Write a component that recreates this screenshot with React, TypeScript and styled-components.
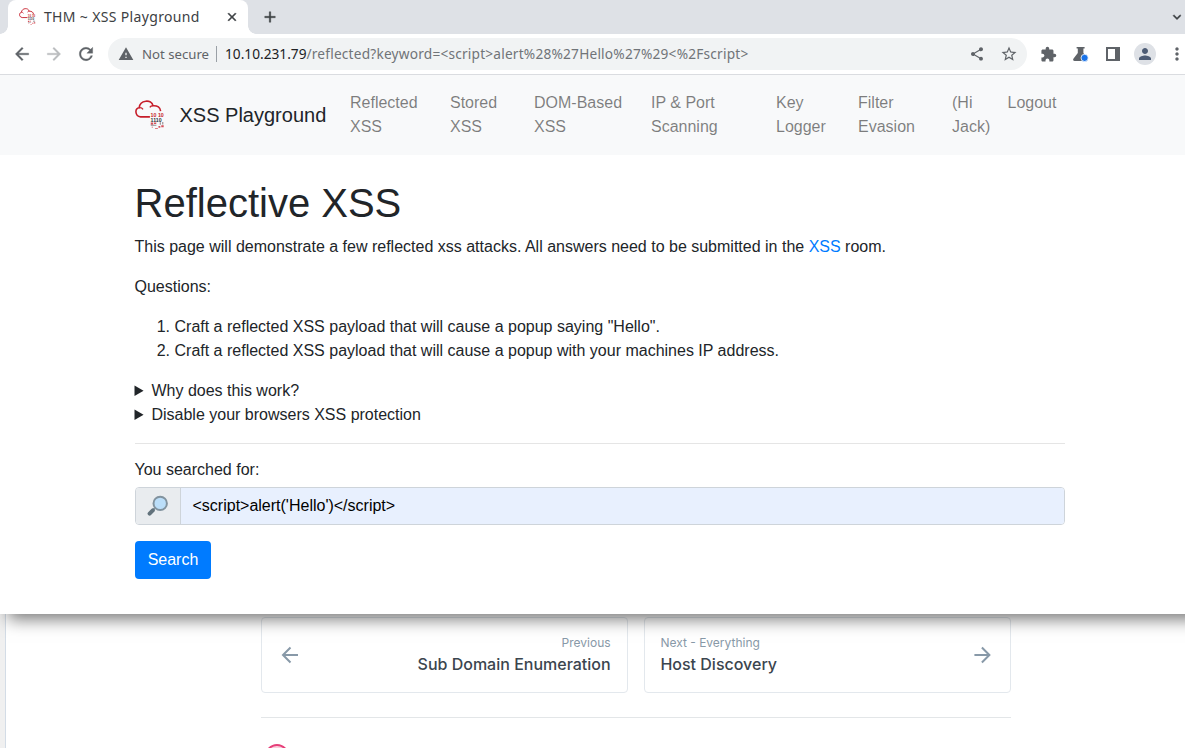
import React from "react";
import styled, { createGlobalStyle } from "styled-components";
import {
  MdArrowBack, MdArrowForward, MdRefresh, MdWarning, MdShare, MdStarBorder,
  MdExtension, MdPerson, MdMoreVert, MdClose, MdAdd, MdExpandMore,
} from "react-icons/md";

const GlobalStyle = createGlobalStyle`
  *, *::before, *::after { box-sizing: border-box; }
  html, body, #root { margin: 0; width: 1185px; height: 748px; overflow: hidden; }
  body { background: #fff; }
  svg { display: block; flex: none; }
`;

const Screen = styled.div`
  display: flex;
  flex-direction: column;
  width: 1185px;
  height: 748px;
  overflow: hidden;
`;

const BrowserWindow = styled.div`
  position: relative;
  z-index: 1;
  flex: none;
  width: 1200px;
  height: 614px;
  background: #fff;
  box-shadow: 8px 5px 16px rgba(0, 0, 0, 0.54);
`;

const TabStrip = styled.div`
  display: flex;
  align-items: flex-start;
  height: 34px;
  padding-left: 8px;
  background: #dee1e6;
  color: #3c4043;
`;

const Tab = styled.div`
  position: relative;
  display: flex;
  align-items: center;
  width: 240px;
  height: 34px;
  padding: 0 9px 1px 11px;
  border-radius: 8px 8px 0 0;
  background: #fff;
  &::before, &::after {
    content: "";
    position: absolute;
    bottom: 0;
    width: 8px;
    height: 8px;
  }
  &::before { left: -8px; background: radial-gradient(circle at 0 0, transparent 7.5px, #fff 8px); }
  &::after { right: -8px; background: radial-gradient(circle at 100% 0, transparent 7.5px, #fff 8px); }
`;

const TabTitle = styled.span`
  flex: 1;
  margin-left: 8px;
  font: 14px "Noto Sans", sans-serif;
  letter-spacing: 0.34px;
  white-space: nowrap;
`;

const CloseIcon = styled(MdClose)`
  path:not([fill="none"]) { stroke: currentColor; stroke-width: 0.9px; }
`;

const NewTab = styled.div`
  margin: 8px 0 0 13px;
  path:not([fill="none"]) { stroke: currentColor; stroke-width: 0.5px; }
`;

const TabSearch = styled.div`
  margin: 9px 15px 0 auto;
  path:not([fill="none"]) { stroke: currentColor; stroke-width: 0.6px; }
`;

const Toolbar = styled.div`
  display: flex;
  align-items: center;
  height: 41px;
  padding-left: 12px;
  border-bottom: 1px solid #dadce0;
  color: #5f6368;
`;

const NavIcon = styled.div<{ $muted?: boolean }>`
  width: 32px;
  color: ${(p) => (p.$muted ? "#babcbe" : "#5f6368")};
  path:not([fill="none"]) { stroke: currentColor; stroke-width: 0.4px; }
`;

const AddressBar = styled.div`
  display: flex;
  align-items: center;
  width: 919px;
  height: 32px;
  padding: 0 9px 0 10px;
  border-radius: 16px;
  background: #f1f3f4;
  font: 14px "Noto Sans", sans-serif;
  white-space: nowrap;
`;

const Security = styled.span`
  width: 75px;
  margin-left: 8px;
  padding-right: 7px;
  border-right: 1px solid #9aa0a6;
  line-height: 16px;
  font-size: 13.2px;
`;

const Url = styled.span`
  flex: 1;
  margin-left: 8px;
  color: #707478;
  font-size: 13.7px;
  line-height: 18px;
  letter-spacing: 0.2px;
  b { font-weight: 400; letter-spacing: 0; color: #202124; }
`;

const BarIcons = styled.div`
  display: flex;
  align-items: center;
  gap: 15px;
`;

const Extensions = styled.div`
  display: flex;
  align-items: center;
  margin-left: 13px;
`;

const ExtensionSlot = styled.div<{ $width?: number }>`
  display: flex;
  width: ${(p) => p.$width ?? 32}px;
`;

const Avatar = styled.div`
  display: flex;
  align-items: center;
  justify-content: center;
  width: 22px;
  height: 22px;
  margin: 0 11px 0 -4px;
  border-radius: 50%;
  background: #dee1e6;
  color: #4d5c75;
`;

const Page = styled.div`
  font: 16px/24px "Liberation Sans", Arial, sans-serif;
  color: #212529;
`;

const Navbar = styled.nav`
  display: flex;
  align-items: center;
  height: 80px;
  padding-left: 134.5px;
  background: #f8f9fa;
`;

const Brand = styled.div`
  display: flex;
  align-items: center;
  width: 207.5px;
  font-size: 20px;
  line-height: 30px;
  white-space: nowrap;
  svg { margin-right: 15px; }
`;

const NavLink = styled.a<{ $width: number }>`
  width: ${(p) => p.$width}px;
  height: 64px;
  padding: 8px;
  color: rgba(0, 0, 0, 0.5);
`;

const Container = styled.main`
  width: 930px;
  margin: 24px 0 0 134.5px;
`;

const Heading = styled.h1`
  margin: 0 0 8px;
  font-size: 40px;
  font-weight: 400;
  line-height: 48px;
`;

const Paragraph = styled.p`
  margin: 0 0 16px;
  a { color: #007bff; }
`;

const Questions = styled.ol`
  margin: 0 0 16px;
  padding-left: 40px;
`;

const Details = styled.details`
  height: 24px;
`;

const Rule = styled.hr`
  margin: 16px 0 14px;
  border: 0;
  border-top: 1px solid rgba(0, 0, 0, 0.1);
`;

const Label = styled.label`
  display: block;
  margin-bottom: 5px;
`;

const InputGroup = styled.div`
  display: flex;
  height: 38px;
  margin-bottom: 16px;
  border: 1px solid #ced4da;
  border-radius: 4px;
  overflow: hidden;
`;

const Prepend = styled.div`
  display: flex;
  align-items: center;
  width: 45px;
  padding-left: 11px;
  background: #e9ecef;
  border-right: 1px solid #ced4da;
`;

const Field = styled.div`
  flex: 1;
  padding: 6px 12px;
  background: #e8f0fe;
  color: #000;
`;

const SearchButton = styled.button`
  display: block;
  width: 76px;
  height: 38px;
  padding: 0 0 0 1px;
  border: 0;
  border-radius: 4px;
  background: #007bff;
  color: #fff;
  font: inherit;
`;

const Backdrop = styled.div`
  display: flex;
  flex: 1;
  background: #fff;
  font-family: Inter, sans-serif;
`;

const SideStrip = styled.div`
  width: 6px;
  background: #f0f0f0;
  border-right: 1px solid #d3dce6;
`;

const Article = styled.div`
  width: 750px;
  margin: 3px 0 0 255px;
`;

const Pager = styled.div`
  display: flex;
  gap: 16px;
  height: 100px;
  padding-bottom: 24px;
`;

const PagerCard = styled.div`
  display: flex;
  flex: 1;
  align-items: center;
  justify-content: space-between;
  padding: 0 16.4px 0 15.4px;
  border: 1px solid #e3e8ed;
  border-radius: 4px;
  color: #8899a8;
`;

const PagerText = styled.div<{ $right?: boolean }>`
  text-align: ${(p) => (p.$right ? "right" : "left")};
`;

const PagerHint = styled.div`
  font-size: 12px;
  line-height: 18px;
`;

const PagerTitle = styled.div`
  color: #3b454e;
  font-size: 16px;
  font-weight: 500;
  line-height: 24px;
`;

const Footer = styled.div`
  height: 60px;
  padding: 26px 0 0 4px;
  border-top: 1px solid #e3e6e8;
`;

const CloudLogo = ({ size }: { size: number }) => (
  <svg width={size} height={size} viewBox="0.6 0 30 32" fill="none">
    <path d="M15.5 18H5.5C-.6 17.4-.9 8.8 4.1 8.2 4.8-.3 17.4-1.1 18.8 6.1c4.7-.4 7.9 2 8.1 5.8" stroke="#c61e2a" strokeWidth="1.7" />
    <path d="M4.1 8.2c2-.2 3.3.6 4 1.8M18.8 6.1c-1.5.1-2.7.7-3.4 1.8" stroke="#c61e2a" strokeWidth="1.4" />
    <g fontFamily="Liberation Sans, sans-serif" fontSize="5.6" fontWeight="700">
      <text x="16.2" y="17.6" fill="#c61e2a">10</text>
      <text x="24" y="17.6" fill="#c61e2a">10</text>
      <text x="16.2" y="23" fill="#33363a">1110</text>
    </g>
    <path d="M16.4 24h2.6v2.4h-2.6zM19.9 24h2.4v1.6h-2.4zM17.4 28.4h1.4v1h-1.4zM21 30h3v1h-3zM24.6 27.6h2v2h-2zM27.6 27h2.6v2h-2.6z" fill="#d5505a" />
    <path d="M16.4 26.4h6v1h-6zM26 23.6h1.2v2.8H26zM28.6 23.4h1.2v2.8h-1.2z" fill="#938c90" />
  </svg>
);

const Flask = () => (
  <svg width="17" height="18" viewBox="-0.6 0 17 18">
    <path d="M4 2h8v1.6h-1.2V8l4 6c.6 1-.2 2-1.2 2H2c-1.3 0-1.9-1.2-1.2-2.2L5.2 8V3.6H4z" fill="#5f6368" />
    <circle cx="12" cy="12.9" r="3.6" fill="#1a73e8" stroke="#fff" strokeWidth="0.8" />
  </svg>
);

const SidePanel = () => (
  <svg width="14" height="14" viewBox="0 0 14 14">
    <path d="M0 0h14v14H0zM2 2v10h7V2z" fill="#5f6368" fillRule="evenodd" />
  </svg>
);

const Magnifier = () => (
  <svg width="22" height="22" viewBox="0 0 22 22">
    <path d="m8 13-2 2" stroke="#82939f" strokeWidth="2" />
    <path d="m5.8 15.4-3.2 3.2" stroke="#62727c" strokeWidth="4" strokeLinecap="round" />
    <circle cx="13.2" cy="8.4" r="6.7" fill="#bbdef9" stroke="#82939f" strokeWidth="2" />
  </svg>
);

const ArrowLeft = () => (
  <svg width="24" height="24" viewBox="0 0 24 24" fill="none" stroke="currentColor" strokeWidth="2">
    <path d="M21 12H6M13.5 4.5 6 12l7.5 7.5" />
  </svg>
);

const ArrowRight = () => (
  <svg width="24" height="24" viewBox="0 0 24 24" fill="none" stroke="currentColor" strokeWidth="2">
    <path d="M4.4 12h15M11.9 4.5l7.5 7.5-7.5 7.5" />
  </svg>
);

const links: { label: string; width: number }[] = [
  { label: "Reflected XSS", width: 100 },
  { label: "Stored XSS", width: 84 },
  { label: "DOM-Based XSS", width: 117 },
  { label: "IP & Port Scanning", width: 125 },
  { label: "Key Logger", width: 82 },
  { label: "Filter Evasion", width: 94 },
  { label: "(Hi Jack)", width: 55.5 },
  { label: "Logout", width: 66 },
];

export default function App() {
  return (
    <Screen>
      <GlobalStyle />
      <BrowserWindow>
        <TabStrip>
          <Tab>
            <CloudLogo size={17} />
            <TabTitle>THM ~ XSS Playground</TabTitle>
            <CloseIcon size={14} />
          </Tab>
          <NewTab><MdAdd size={18} /></NewTab>
          <TabSearch><MdExpandMore size={16} /></TabSearch>
        </TabStrip>
        <Toolbar>
          <NavIcon><MdArrowBack size={20} /></NavIcon>
          <NavIcon $muted><MdArrowForward size={20} /></NavIcon>
          <NavIcon><MdRefresh size={20} /></NavIcon>
          <AddressBar>
            <MdWarning size={16} />
            <Security>Not secure</Security>
            <Url><b>10.10.231.79</b>/reflected?keyword=&lt;script&gt;alert%28%27Hello%27%29&lt;%2Fscript&gt;</Url>
            <BarIcons>
              <MdShare size={16} />
              <MdStarBorder size={18} />
            </BarIcons>
          </AddressBar>
          <Extensions>
            <ExtensionSlot><MdExtension size={17} /></ExtensionSlot>
            <ExtensionSlot $width={34}><Flask /></ExtensionSlot>
            <ExtensionSlot><SidePanel /></ExtensionSlot>
            <Avatar><MdPerson size={18} /></Avatar>
            <MdMoreVert size={20} />
          </Extensions>
        </Toolbar>
        <Page>
          <Navbar>
            <Brand><CloudLogo size={30} />XSS Playground</Brand>
            {links.map((l) => <NavLink key={l.label} $width={l.width}>{l.label}</NavLink>)}
          </Navbar>
          <Container>
            <Heading>Reflective XSS</Heading>
            <Paragraph>
              This page will demonstrate a few reflected xss attacks. All answers need to be submitted in the <a>XSS</a> room.
            </Paragraph>
            <Paragraph>Questions:</Paragraph>
            <Questions>
              <li>Craft a reflected XSS payload that will cause a popup saying "Hello".</li>
              <li>Craft a reflected XSS payload that will cause a popup with your machines IP address.</li>
            </Questions>
            <Details><summary>Why does this work?</summary></Details>
            <Details><summary>Disable your browsers XSS protection</summary></Details>
            <Rule />
            <Label>You searched for:</Label>
            <InputGroup>
              <Prepend><Magnifier /></Prepend>
              <Field>&lt;script&gt;alert('Hello')&lt;/script&gt;</Field>
            </InputGroup>
            <SearchButton>Search</SearchButton>
          </Container>
        </Page>
      </BrowserWindow>
      <Backdrop>
        <SideStrip />
        <Article>
          <Pager>
            <PagerCard>
              <ArrowLeft />
              <PagerText $right>
                <PagerHint>Previous</PagerHint>
                <PagerTitle>Sub Domain Enumeration</PagerTitle>
              </PagerText>
            </PagerCard>
            <PagerCard>
              <PagerText>
                <PagerHint>Next - Everything</PagerHint>
                <PagerTitle>Host Discovery</PagerTitle>
              </PagerText>
              <ArrowRight />
            </PagerCard>
          </Pager>
          <Footer>
            <svg width="24" height="24" viewBox="0 0 24 24">
              <circle cx="12" cy="12" r="11" fill="#f9cfdd" stroke="#e63f79" strokeWidth="2" />
            </svg>
          </Footer>
        </Article>
      </Backdrop>
    </Screen>
  );
}
